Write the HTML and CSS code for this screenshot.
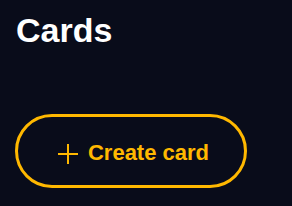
FILE: index.html
```html
<!DOCTYPE html>
<html lang="en">
<head>
  <meta charset="UTF-8" />
  <title>Cards</title>
  <link rel="stylesheet" href="styles.css">
</head>
<body>
  <div class="page">
    <h1>Cards</h1>
    <button class="create-btn">
      <svg class="plus" width="20" height="20" viewBox="0 0 20 20">
        <path d="M10 0v20M0 10h20" stroke="currentColor" stroke-width="2" fill="none"/>
      </svg>
      <span>Create card</span>
    </button>
  </div>
</body>
</html>
```

FILE: styles.css
```css
body {
  margin: 0;
  background-color: #090c1a;
  color: #fff;
  font-family: "Liberation Sans", Arial, sans-serif;
}
.page {
  padding: 11px 15px;
  height: 206px;
  box-sizing: border-box;
}
h1 {
  margin: 0;
  font-size: 34px;
  line-height: 38px;
  font-weight: bold;
  padding-left: 1px;
}
.create-btn {
  margin-top: 65px;
  width: 232px;
  height: 74px;
  border: 3px solid #ffb800;
  border-radius: 40px;
  background: none;
  color: #ffb800;
  font-family: "Liberation Sans", Arial, sans-serif;
  font-size: 22px;
  font-weight: bold;
  display: flex;
  align-items: center;
  justify-content: center;
  gap: 10px;
  padding: 4px 0 0 5px;
  cursor: pointer;
}
.plus {
  display: block;
  margin-top: 1px;
}
```
